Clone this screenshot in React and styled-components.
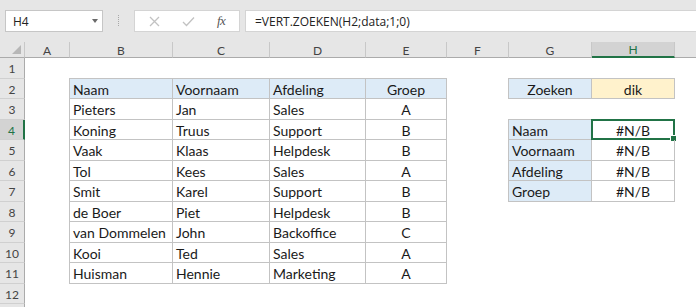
import React from "react";
import styled, { createGlobalStyle } from "styled-components";

const COLS = [
  { key: "A", width: 45 },
  { key: "B", width: 103 },
  { key: "C", width: 97 },
  { key: "D", width: 96 },
  { key: "E", width: 81 },
  { key: "F", width: 62 },
  { key: "G", width: 83 },
  { key: "H", width: 83 },
  { key: "I", width: 140 },
];
const ROWS = 13;
const ROW_H = 20.5;

const people = [
  ["Pieters", "Jan", "Sales", "A"],
  ["Koning", "Truus", "Support", "B"],
  ["Vaak", "Klaas", "Helpdesk", "B"],
  ["Tol", "Kees", "Sales", "A"],
  ["Smit", "Karel", "Support", "B"],
  ["de Boer", "Piet", "Helpdesk", "B"],
  ["van Dommelen", "John", "Backoffice", "C"],
  ["Kooi", "Ted", "Sales", "A"],
  ["Huisman", "Hennie", "Marketing", "A"],
];

// build a map "B2" -> cell spec
const cells = {};
["Naam", "Voornaam", "Afdeling", "Groep"].forEach((t, i) => {
  const col = "BCDE"[i];
  cells[col + 2] = { text: t, fill: "blue", center: col === "E", top: true, left: col === "B" };
});
people.forEach((row, r) => {
  row.forEach((t, i) => {
    const col = "BCDE"[i];
    cells[col + (r + 3)] = { text: t, center: col === "E", left: col === "B" };
  });
});
cells.G2 = { text: "Zoeken", fill: "blue", center: true, top: true, left: true };
cells.H2 = { text: "dik", fill: "yellow", center: true, top: true };
["Naam", "Voornaam", "Afdeling", "Groep"].forEach((t, i) => {
  cells["G" + (i + 4)] = { text: t, fill: "blue", top: i === 0, left: true };
  cells["H" + (i + 4)] = { text: "#N/B", center: true, top: i === 0, active: i === 0 };
});

const GlobalStyle = createGlobalStyle`
  html, body { margin: 0; padding: 0; background: #ffffff; }
  body { width: 696px; height: 307px; overflow: hidden; }
`;

const Window = styled.div`
  width: 696px;
  height: 307px;
  overflow: hidden;
  display: flex;
  flex-direction: column;
  background: #e6e6e6;
`;

const FormulaBar = styled.div`
  height: 42px;
  flex: none;
  display: flex;
  align-items: flex-start;
  padding: 10px 0 0 5px;
  box-sizing: border-box;
`;

const NameBox = styled.div`
  width: 98px;
  height: 22px;
  box-sizing: border-box;
  background: #fff;
  border: 1px solid #c6c6c6;
  display: flex;
  align-items: center;
  justify-content: space-between;
  padding: 0 4px 0 7px;
  font-family: "Open Sans", sans-serif;
  font-size: 12px;
  color: #222;
`;

const Caret = styled.span`
  width: 0;
  height: 0;
  border-left: 3.5px solid transparent;
  border-right: 3.5px solid transparent;
  border-top: 4px solid #6a6a6a;
`;

const Grip = styled.div`
  width: 1px;
  height: 11px;
  margin: 5px 14px 0 15px;
  border-left: 1px dotted #a8a8a8;
`;

const FxBox = styled.div`
  width: 106px;
  height: 22px;
  box-sizing: border-box;
  background: #fff;
  border: 1px solid #d4d4d4;
  display: flex;
  align-items: center;
  padding: 0 0 0 14px;
  gap: 22px;
`;

const FxLabel = styled.span`
  font-family: "Liberation Serif", serif;
  font-style: italic;
  font-size: 13px;
  color: #555;
  letter-spacing: -0.5px;
`;

const Formula = styled.div`
  flex: 1;
  height: 22px;
  margin-left: 5px;
  box-sizing: border-box;
  background: #fff;
  border: 1px solid #d4d4d4;
  border-right: none;
  display: flex;
  align-items: center;
  padding-left: 9px;
  font-family: "Open Sans", sans-serif;
  font-size: 12px;
  color: #222;
`;

const Sheet = styled.div`
  flex: 1;
  display: grid;
  grid-template-columns: 25px ${COLS.map((c) => c.width + "px").join(" ")};
  grid-template-rows: 16px repeat(${ROWS}, ${ROW_H}px);
  background: #ffffff;
`;

const Corner = styled.div`
  background: #e6e6e6;
  border-right: 1px solid #c8c8c8;
  border-bottom: 1px solid #ababab;
  box-sizing: border-box;
  position: relative;
  &::after {
    content: "";
    position: absolute;
    right: 3px;
    bottom: 3px;
    border-left: 9px solid transparent;
    border-bottom: 9px solid #b7b7b7;
  }
`;

const ColHead = styled.div`
  background: ${(p) => (p.$selected ? "#d3d3d3" : "#e6e6e6")};
  border-right: 1px solid #c8c8c8;
  border-bottom: ${(p) => (p.$selected ? "2px solid #217346" : "1px solid #ababab")};
  box-sizing: border-box;
  display: flex;
  align-items: center;
  justify-content: center;
  font-family: "Lato", sans-serif;
  font-size: 12px;
  color: ${(p) => (p.$selected ? "#217346" : "#444")};
  padding-top: 1px;
`;

const RowHead = styled.div`
  background: ${(p) => (p.$selected ? "#d3d3d3" : "#e6e6e6")};
  border-right: ${(p) => (p.$selected ? "2px solid #217346" : "1px solid #ababab")};
  border-bottom: 1px solid #d0d0d0;
  box-sizing: border-box;
  display: flex;
  align-items: center;
  justify-content: center;
  font-family: "Lato", sans-serif;
  font-size: 12px;
  color: ${(p) => (p.$selected ? "#217346" : "#444")};
  padding-top: 2px;
`;

const fills = { blue: "#ddebf7", yellow: "#fff2cc" };
const LINE = "1px solid #c3c3c3";

const Cell = styled.div`
  position: relative;
  box-sizing: border-box;
  background: ${(p) => (p.$fill ? fills[p.$fill] : "transparent")};
  border-right: ${(p) => (p.$boxed ? LINE : "none")};
  border-bottom: ${(p) => (p.$boxed ? LINE : "none")};
  border-top: ${(p) => (p.$top ? LINE : "none")};
  border-left: ${(p) => (p.$left ? LINE : "none")};
  margin-top: ${(p) => (p.$top ? "-1px" : "0")};
  margin-left: ${(p) => (p.$left ? "-1px" : "0")};
  display: flex;
  align-items: center;
  justify-content: ${(p) => (p.$center ? "center" : "flex-start")};
  padding: 2px 3px 0 3px;
  font-family: "Lato", sans-serif;
  font-size: 14px;
  color: #1a1a1a;
  white-space: nowrap;
`;

const Active = styled.div`
  position: absolute;
  inset: -1px -1px -1px -1px;
  border: 2px solid #217346;
  pointer-events: none;
  &::after {
    content: "";
    position: absolute;
    right: -4px;
    bottom: -4px;
    width: 5px;
    height: 5px;
    background: #217346;
    border: 1px solid #fff;
  }
`;

function CrossIcon() {
  return (
    <svg width="11" height="11" viewBox="0 0 11 11">
      <path d="M1 1 L10 10 M10 1 L1 10" stroke="#c2c2c2" strokeWidth="1.3" fill="none" />
    </svg>
  );
}

function CheckIcon() {
  return (
    <svg width="13" height="11" viewBox="0 0 13 11">
      <path d="M1 6 L4.5 9.5 L12 1.5" stroke="#c2c2c2" strokeWidth="1.3" fill="none" />
    </svg>
  );
}

export default function App() {
  const body = [];
  for (let r = 1; r <= ROWS; r++) {
    // the last row is only a sliver at the bottom edge, its number is not visible
    body.push(
      <RowHead key={"rh" + r} $selected={r === 4}>
        {r < ROWS ? r : ""}
      </RowHead>
    );
    COLS.forEach((c) => {
      const spec = cells[c.key + r];
      body.push(
        <Cell
          key={c.key + r}
          $boxed={!!spec}
          $fill={spec && spec.fill}
          $center={spec && spec.center}
          $top={spec && spec.top}
          $left={spec && spec.left}
        >
          {spec && spec.text}
          {spec && spec.active && <Active />}
        </Cell>
      );
    });
  }

  return (
    <>
      <GlobalStyle />
      <Window>
        <FormulaBar>
          <NameBox>
            H4
            <Caret />
          </NameBox>
          <Grip />
          <FxBox>
            <CrossIcon />
            <CheckIcon />
            <FxLabel>fx</FxLabel>
          </FxBox>
          <Formula>=VERT.ZOEKEN(H2;data;1;0)</Formula>
        </FormulaBar>
        <Sheet>
          <Corner />
          {COLS.map((c) => (
            <ColHead key={c.key} $selected={c.key === "H"}>
              {c.key === "I" ? "" : c.key}
            </ColHead>
          ))}
          {body}
        </Sheet>
      </Window>
    </>
  );
}
